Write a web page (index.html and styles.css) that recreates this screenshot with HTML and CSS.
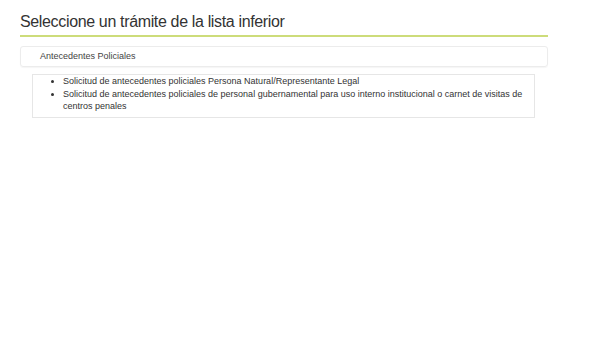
FILE: index.html
```html
<!DOCTYPE html>
<html lang="es">
<head>
<meta charset="utf-8">
<link rel="stylesheet" href="styles.css">
</head>
<body>
<div class="page">
  <h1 class="title">Seleccione un trámite de la lista inferior</h1>
  <div class="group">Antecedentes Policiales</div>
  <div class="items">
    <ul class="list">
      <li>Solicitud de antecedentes policiales Persona Natural/Representante Legal</li>
      <li>Solicitud de antecedentes policiales de personal gubernamental para uso interno institucional o carnet de visitas de centros penales</li>
    </ul>
  </div>
</div>
</body>
</html>
```

FILE: styles.css
```css
html, body {
  margin: 0;
  background: #fff;
}
body {
  font-family: "Liberation Sans", Arial, sans-serif;
  color: #333;
}
.page {
  width: 528px;
  padding: 10px 0 0 20px;
}
.title {
  margin: 0;
  font-size: 16px;
  letter-spacing: -0.35px;
  font-weight: normal;
  line-height: 24px;
  color: #333;
  padding-bottom: 1px;
  border-bottom: 2px solid #cddc7a;
}
.group {
  margin-top: 9px;
  height: 19px;
  border: 1px solid #ececec;
  border-radius: 3px;
  box-shadow: 0 1px 1px rgba(0,0,0,0.04);
  padding-left: 19px;
  font-size: 9px;
  line-height: 18px;
  color: #444;
}
.items {
  margin: 7px 13px 0 12px;
  border: 1px solid #e6e6e6;
  padding: 0 10px 4px 0;
}
.list {
  margin: 0;
  padding-left: 30px;
  font-size: 9px;
  line-height: 12.5px;
  color: #333;
}
```
